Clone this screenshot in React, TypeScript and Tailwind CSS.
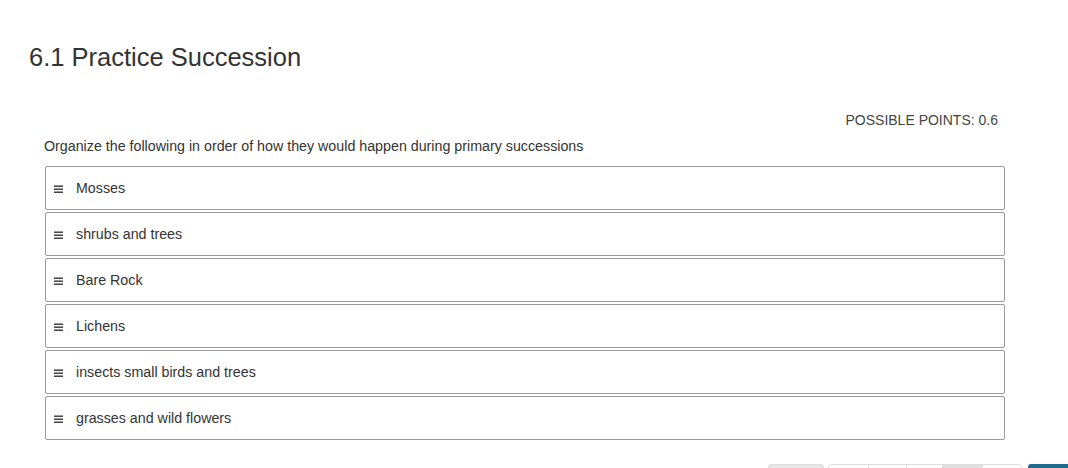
const items = [
  'Mosses',
  'shrubs and trees',
  'Bare Rock',
  'Lichens',
  'insects small birds and trees',
  'grasses and wild flowers',
];

function Grip() {
  return (
    <svg width="9" height="8" viewBox="0 0 9 8" className="shrink-0">
      <rect x="0" y="0.5" width="9" height="1.4" fill="#333" />
      <rect x="0" y="3.5" width="9" height="1.4" fill="#333" />
      <rect x="0" y="6.5" width="9" height="1.4" fill="#333" />
    </svg>
  );
}

export default function App() {
  return (
    <div className="w-[1068px] h-[468px] overflow-hidden bg-white text-[#333] font-['Liberation_Sans',Arial,sans-serif]">
      {/* Title */}
      <h1 className="pl-[29px] pt-[40px] text-[25.5px] leading-[34px] text-[#333]">6.1 Practice Succession</h1>

      <div className="pl-[44px] pr-[63px]">
        <div className="mt-[38px] flex justify-end pr-[7px] text-[14px] leading-[16px] text-[#444]">
          POSSIBLE POINTS: 0.6
        </div>
        <p className="mt-[10px] text-[14.25px] leading-[16px] text-[#333]">
          Organize the following in order of how they would happen during primary successions
        </p>

        {/* Sortable list */}
        <ul className="mt-[12px] ml-px flex flex-col gap-[2px]">
          {items.map(item => (
            <li
              key={item}
              className="h-[44px] flex items-center gap-[13px] pl-[8px] pt-[2px] border border-[#999] rounded-[2px] bg-white text-[14.25px] text-[#333]"
            >
              <Grip />
              <span>{item}</span>
            </li>
          ))}
        </ul>
      </div>

      {/* Footer buttons (cut off) */}
      <div className="mt-[24px] flex justify-end gap-[4px]">
        <div className="w-[56px] h-[30px] bg-[#e8e8e8] border border-[#ddd] rounded-[3px]" />
        <div className="flex h-[30px] border border-[#ddd] rounded-[3px]">
          <div className="w-[40px] border-r border-[#ddd]" />
          <div className="w-[38px] border-r border-[#ddd]" />
          <div className="w-[36px] border-r border-[#ddd]" />
          <div className="w-[40px] bg-[#e0e0e0] border-r border-[#ddd]" />
          <div className="w-[38px]" />
        </div>
        <div className="ml-[2px] w-[40px] h-[30px] bg-[#1f6a8f] rounded-l-[3px]" />
      </div>
    </div>
  );
}
